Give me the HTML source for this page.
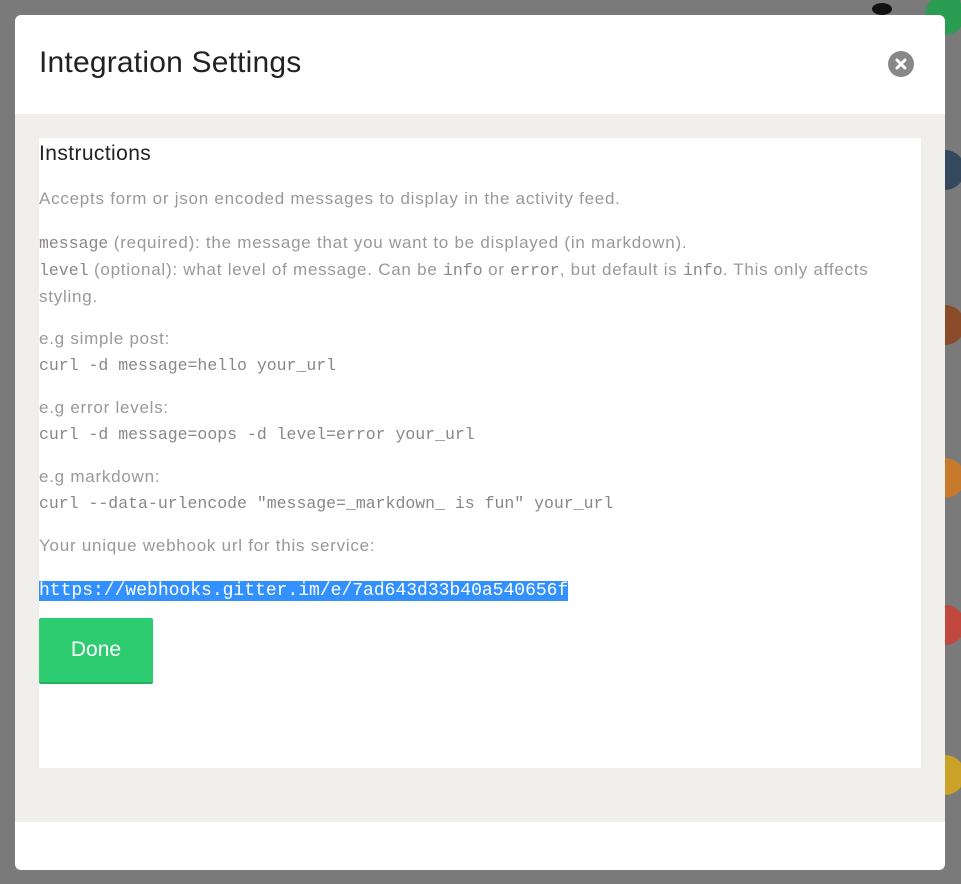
<!DOCTYPE html>
<html><head><style>
body{margin:0;width:961px;height:884px;background:#7a7a7a;position:relative;overflow:hidden;font-family:"Liberation Sans",sans-serif}
.av{position:absolute;left:925px;width:40px;height:40px;border-radius:50%}
.modal{position:absolute;left:15px;top:15px;width:930px;height:855px;background:#fff;border-radius:6px;overflow:hidden}
.hdr{height:99px;position:relative}
.hdr h1{margin:0;position:absolute;left:24px;top:31px;font-weight:normal;font-size:30px;color:#222;letter-spacing:0.2px}
.close{position:absolute;left:873px;top:36px;width:26px;height:26px;border-radius:50%;background:#888}
.bodyb{position:absolute;top:99px;left:0;width:930px;height:708px;background:#f0efec}
.panel{position:absolute;left:24px;top:24px;width:882px;height:630px;background:#fff}
.c{position:absolute;left:24px;top:124px;width:885px;color:#999;font-size:17px;line-height:26px;letter-spacing:0.75px}
.c p{margin:0 0 16px}
code,.m{font-family:"Liberation Mono",monospace;font-size:16.5px;color:#888;letter-spacing:0}
h3{margin:0 0 17px;font-weight:normal;color:#222;font-size:21px;line-height:30px;letter-spacing:0.4px}
.url{background:#3390ff;color:#fff;font-family:"Liberation Mono",monospace;font-size:18px;letter-spacing:0}
.btn{position:absolute;left:24px;top:603px;width:114px;height:66px;background:#2ecc71;border-bottom:2px solid #27ae60;color:#fff;font-size:21px;line-height:64px;text-align:center;box-sizing:border-box;border-radius:2px}
</style></head><body>
<div class="av" style="top:-5px;background:#2a9d52"></div>
<div style="position:absolute;left:872px;top:3px;width:20px;height:12px;border-radius:50%;background:#111"></div>
<div class="av" style="top:150px;background:#34495e"></div>
<div class="av" style="top:305px;background:#8a4b2a"></div>
<div class="av" style="top:458px;background:#c77a2b"></div>
<div class="av" style="top:605px;background:#c0483e"></div>
<div class="av" style="top:755px;background:#c9a227"></div>
<div class="modal">
<div class="hdr"><h1>Integration Settings</h1>
<div class="close"><svg width="26" height="26"><path d="M9 9L17 17M17 9L9 17" stroke="#fff" stroke-width="3" stroke-linecap="round"/></svg></div></div>
<div class="bodyb"><div class="panel"></div></div>
<div class="c">
<h3>Instructions</h3>
<p style="margin-bottom:18px">Accepts form or json encoded messages to display in the activity feed.</p>
<p><code>message</code> (required): the message that you want to be displayed (in markdown).<br><code>level</code> (optional): what level of message. Can be <code>info</code> or <code>error</code>, but default is <code>info</code>. This only affects<br>styling.</p>
<p>e.g simple post:<br><span class="m">curl -d message=hello your_url</span></p>
<p>e.g error levels:<br><span class="m">curl -d message=oops -d level=error your_url</span></p>
<p>e.g markdown:<br><span class="m">curl --data-urlencode "message=_markdown_ is fun" your_url</span></p>
<p style="margin-bottom:18px">Your unique webhook url for this service:</p>
<p><span class="url">https://webhooks.gitter.im/e/7ad643d33b40a540656f</span></p>
</div>
<div class="btn">Done</div>
</div>
</body></html>
